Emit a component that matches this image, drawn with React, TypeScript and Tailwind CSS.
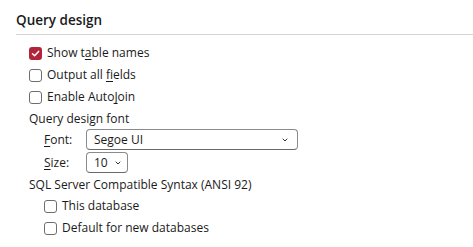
import { ChevronDown } from 'lucide-react';

function Box({ checked = false }: { checked?: boolean }) {
  return checked ? (
    <span className="w-[13px] h-[13px] rounded-[3px] bg-[#b0253a] flex items-center justify-center shrink-0">
      <svg width="9" height="9" viewBox="0 0 9 9" fill="none">
        <path d="M1.5 4.8 L3.6 6.8 L7.6 2.4" stroke="white" strokeWidth="1.5" strokeLinecap="round" strokeLinejoin="round" />
      </svg>
    </span>
  ) : (
    <span className="w-[13px] h-[13px] rounded-[3px] border border-[#6e6e6e] bg-white shrink-0" />
  );
}

function Check({ checked, children }: { checked?: boolean; children: React.ReactNode }) {
  return (
    <div className="flex items-center gap-[5px] h-[22px]">
      <Box checked={checked} />
      <span>{children}</span>
    </div>
  );
}

export default function App() {
  return (
    <div
      className="w-[473px] h-[247px] bg-white text-[#1a1a1a] text-[12px] leading-none"
      style={{ fontFamily: '"Open Sans", "Noto Sans", sans-serif' }}
    >
      {/* Header */}
      <div className="pl-4 pt-[8px]">
        <div className="text-[13.5px] font-semibold h-[26px] flex items-center">Query design</div>
        <div className="border-t border-[#d4d4d4]" />
      </div>

      <div className="pl-[29px] pt-[7px]">
        <Check checked>
          Show t<u className="underline-offset-2">a</u>ble names
        </Check>
        <Check>
          Output all <u className="underline-offset-2">f</u>ields
        </Check>
        <Check>
          Enable Auto<u className="underline-offset-2">J</u>oin
        </Check>

        <div className="h-[21px] flex items-center">Query design font</div>

        {/* Font rows */}
        <div className="pl-[15px]">
          <div className="flex items-start h-[22px]">
            <span className="w-[42px] h-[21px] flex items-center">
              <span>
                <u className="underline-offset-2">F</u>ont:
              </span>
            </span>
            <div className="w-[212px] h-[21px] border border-[#8a8a8a] border-b-[#6a6a6a] rounded-[4px] flex items-center justify-between pl-[7px] pr-[8px]">
              <span>Segoe UI</span>
              <ChevronDown className="w-[8px] h-[8px] text-[#333]" strokeWidth={3} />
            </div>
          </div>
          <div className="flex items-start h-[23px] pt-[1px]">
            <span className="w-[42px] h-[21px] flex items-center">
              <span>
                <u className="underline-offset-2">S</u>ize:
              </span>
            </span>
            <div className="w-[42px] h-[21px] border border-[#8a8a8a] border-b-[#6a6a6a] rounded-[4px] flex items-center justify-between pl-[7px] pr-[5px]">
              <span>10</span>
              <ChevronDown className="w-[8px] h-[8px] text-[#333]" strokeWidth={3} />
            </div>
          </div>
        </div>

        <div className="h-[21px] flex items-center">SQL Server Compatible Syntax (ANSI 92)</div>

        <div className="pl-[15px]">
          <Check>This database</Check>
          <Check>Default for new databases</Check>
        </div>
      </div>
    </div>
  );
}
